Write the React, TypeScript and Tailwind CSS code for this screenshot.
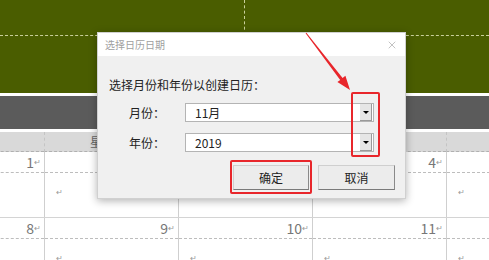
import { X } from "lucide-react";

const font = { fontFamily: '"Noto Sans CJK SC", "Noto Sans", sans-serif' };

const headers = ["星期日", "星期一", "星期二", "星期三", "星期四", "星期五"];
const weeks = [
  ["1", "2", "3", "4", "5", "6"],
  ["8", "9", "10", "11", "12", "13"],
];

function Mark() {
  return <span className="text-[8px] text-[#999] leading-none">↵</span>;
}

function DropButton() {
  return (
    <div className="ml-auto flex h-[17px] w-[12px] items-center justify-center border-b border-r border-[#9a9a9a] bg-[#e6e6e6]">
      <div className="h-0 w-0 border-x-[3px] border-t-[3px] border-x-transparent border-t-black" />
    </div>
  );
}

function Field({ label, value }: { label: string; value: string }) {
  return (
    <div className="flex items-center">
      <span className="w-[87px] shrink-0 whitespace-nowrap pl-[31px] text-[12px] text-[#222]">{label}</span>
      <div className="flex h-[19px] w-[189px] shrink-0 items-center border border-[#b4b4b4] bg-white pl-[9px] pr-[1px]">
        <span className="text-[12px] text-[#222]">{value}</span>
        <DropButton />
      </div>
    </div>
  );
}

export default function App() {
  return (
    <div className="relative h-[260px] w-[489px] overflow-hidden bg-white" style={font}>
      {/* green banner */}
      <div className="h-[93px] bg-[#4a5d00]">
        <div className="flex h-[36px] border-b border-dashed border-[#c9cf9a]">
          <div className="w-[245px] border-r border-dashed border-[#c9cf9a]" />
        </div>
      </div>
      <div className="mt-[3px] h-[33px] bg-[#5b5b5b]" />
      <div className="ml-[-90px] mt-[3px] flex">
        {headers.map((h, i) => (
          <div
            key={h}
            className={`flex h-[20px] w-[134px] shrink-0 items-center justify-center whitespace-nowrap border-b border-dashed border-[#b0b0b0] bg-[#d9d9d9] text-[12px] text-[#666] ${i > 0 ? "border-l border-l-[#c4c4c4]" : ""}`}
          >
            {h}
            <Mark />
          </div>
        ))}
      </div>
      {weeks.map((w, r) => (
        <div key={r} className="ml-[-90px] flex border-b border-[#d4d4d4]">
          {w.map((d, i) => (
            <div key={i} className={`w-[134px] shrink-0 ${i > 0 ? "border-l border-[#cfcfcf]" : ""}`}>
              <div className="flex h-[21px] items-center justify-end border-b border-dashed border-[#bdbdbd] pr-[3px] text-[14px] text-[#777]">
                {d}
                <Mark />
              </div>
              <div className="h-[44px] pl-[11px] pt-[3px]">
                <Mark />
              </div>
            </div>
          ))}
        </div>
      ))}

      {/* dialog */}
      <div className="absolute left-[97px] top-[32px] flex h-[167px] w-[309px] flex-col border border-[#d0d0d0] bg-[#f0f0f0] shadow-[0_2px_8px_rgba(0,0,0,0.3)]">
        <div className="flex h-[23px] items-center bg-white pl-[7px] pr-[7px]">
          <span className="text-[10px] text-[#a0a0a0]">选择日历日期</span>
          <X size={12} strokeWidth={1.2} className="ml-auto text-[#999]" />
        </div>
        <div className="pl-[11px] pt-[21px] text-[12px] leading-[16px] text-[#222]">选择月份和年份以创建日历：</div>
        <div className="mt-[10px] flex flex-col gap-[11px]">
          <Field label="月份：" value="11月" />
          <Field label="年份：" value="2019" />
        </div>
        <div className="mt-[13px] flex justify-end gap-[9px] pr-[10px]">
          <button className="h-[25px] w-[76px] border border-[#cfcfcf] border-b-[#7a7a7a] border-r-[#8a8a8a] bg-[#ececec] text-[12px] text-[#222]">
            确定
          </button>
          <button className="h-[25px] w-[77px] border border-[#cfcfcf] border-b-[#7a7a7a] border-r-[#8a8a8a] bg-[#ececec] text-[12px] text-[#222]">
            取消
          </button>
        </div>
      </div>

      {/* red annotations */}
      <div className="absolute left-[230px] top-[160px] h-[34px] w-[82px] rounded-[2px] border-2 border-[#e8262b]" />
      <div className="absolute left-[351px] top-[92px] h-[65px] w-[29px] rounded-[2px] border-2 border-[#e8262b]" />
      <svg className="absolute left-0 top-0" width="489" height="260">
        <polygon
          points="305.6,33.3 306.4,32.7 342.6,77.9 345.4,75.8 350,90 337.4,82 340.2,79.9"
          fill="#e8262b"
        />
      </svg>
    </div>
  );
}
